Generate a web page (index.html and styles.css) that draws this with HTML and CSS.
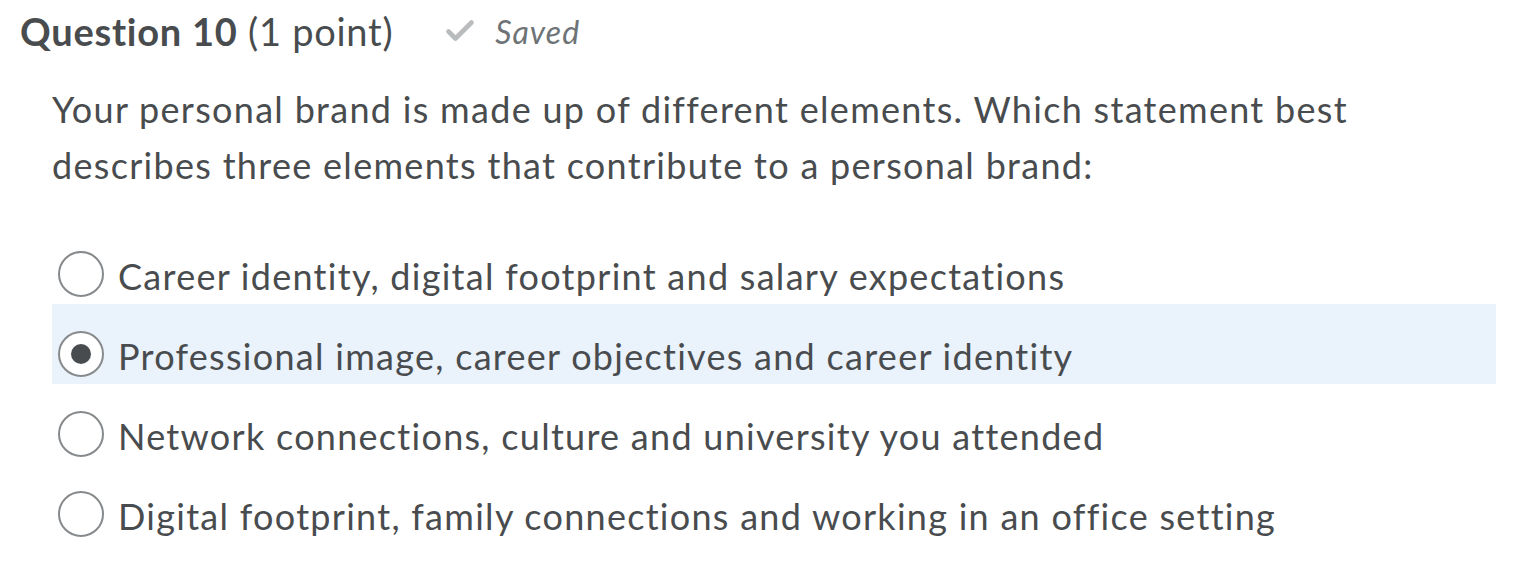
FILE: index.html
```html
<!DOCTYPE html>
<html>
<head>
<meta charset="utf-8">
<link rel="stylesheet" href="styles.css">
</head>
<body>
<div class="quiz">
  <div class="header">
    <h2 class="title"><span class="qnum">Question 10</span> <span class="points">(1 point)</span></h2>
    <div class="saved">
      <svg class="check" width="30" height="24" viewBox="0 0 30 24"><path d="M3.5 12.5 L10.5 19.5 L26.5 3.5" fill="none" stroke="#b9bcbe" stroke-width="4.6" stroke-linecap="round" stroke-linejoin="round"/></svg>
      <span class="saved-text">Saved</span>
    </div>
  </div>
  <p class="stem">Your personal brand is made up of different elements. Which statement best describes three elements that contribute to a personal brand:</p>
  <ul class="options">
    <li class="option"><span class="radio"></span><span class="label">Career identity, digital footprint and salary expectations</span></li>
    <li class="option selected"><span class="radio checked"></span><span class="label">Professional image, career objectives and career identity</span></li>
    <li class="option"><span class="radio"></span><span class="label">Network connections, culture and university you attended</span></li>
    <li class="option"><span class="radio"></span><span class="label">Digital footprint, family connections and working in an office setting</span></li>
  </ul>
</div>
</body>
</html>
```
FILE: styles.css
```css
html, body {
  margin: 0;
  padding: 0;
  background: #ffffff;
}
body {
  font-family: Lato, "Open Sans", sans-serif;
  color: #494c4e;
  font-variant-ligatures: none;
}
.quiz {
  width: 1528px;
}
.header {
  display: flex;
  align-items: center;
  height: 62px;
  padding-left: 20px;
}
.title {
  margin: 0;
  font-size: 38px;
  font-weight: 400;
  line-height: 62px;
  letter-spacing: 0.75px;
}
.qnum {
  font-weight: 700;
}
.saved {
  display: flex;
  align-items: center;
  margin-left: 52px;
  gap: 20px;
}
.check {
  display: block;
}
.saved-text {
  font-style: italic;
  font-size: 32px;
  letter-spacing: 1px;
  color: #6e7376;
}
.stem {
  margin: 19px 0 0 52px;
  width: 1400px;
  font-size: 36px;
  line-height: 56px;
  letter-spacing: 1.3px;
}
.options {
  list-style: none;
  margin: 31px 0 0 52px;
  padding: 0;
  width: 1444px;
}
.option {
  display: flex;
  align-items: center;
  height: 60px;
  padding: 20px 0 0 6px;
  gap: 14px;
}
.option.selected {
  background: #eaf2fb;
}
.radio {
  flex: none;
  width: 46px;
  height: 46px;
  box-sizing: border-box;
  border: 2px solid #878a8c;
  border-radius: 50%;
  background: #fff;
  display: flex;
  align-items: center;
  justify-content: center;
}
.radio.checked::after {
  content: "";
  width: 20px;
  height: 20px;
  border-radius: 50%;
  background: #494c4e;
}
.label {
  font-size: 36px;
  line-height: 46px;
  padding-top: 4px;
  letter-spacing: 1.28px;
}
```
